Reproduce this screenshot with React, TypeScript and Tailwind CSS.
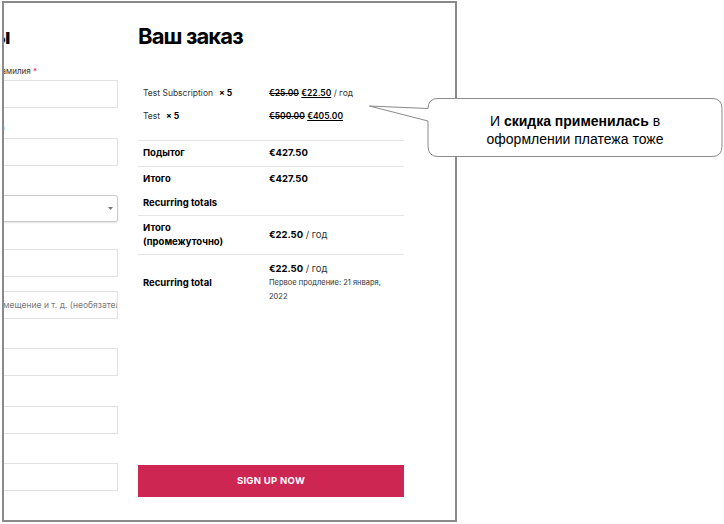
import React from "react";

const inter = { fontFamily: "Inter, 'Noto Sans', sans-serif" } as const;

function Field({ h = "h-[28px]", mt, children }: { h?: string; mt: string; children?: React.ReactNode }) {
  return (
    <div className={`${mt} ${h} -ml-[20px] w-[134px] shrink-0 border border-[#e2e2e2] bg-white overflow-hidden flex items-center`}>
      {children}
    </div>
  );
}

export default function App() {
  return (
    <div className="relative w-[724px] h-[524px] bg-white overflow-hidden" style={inter}>
      <div className="ml-[2px] mt-[1px] w-[455px] h-[521px] border-2 border-[#8a8a8a] flex overflow-hidden">
        {/* Left (cut-off) billing column */}
        <div className="w-[114px] shrink-0 flex flex-col">
          <div className="mt-[20px] h-[26px] w-[6px] flex justify-end whitespace-nowrap text-[22px] font-bold leading-[26px] tracking-[-0.04em] text-black">
            Детали оплаты
          </div>
          <div className="mt-[17px] h-[10px] w-[33px] flex justify-end whitespace-nowrap text-[8px] leading-[10px] text-[#333]">
            Фамилия&nbsp;<span className="text-[#cd2653]">*</span>
          </div>
          <Field mt="mt-[4px]" />
          <div className="mt-[15px] h-[10px] w-[1px] flex justify-end whitespace-nowrap text-[8px] leading-[10px] text-[#333]">
            Название компании (необязательно)
          </div>
          <Field mt="mt-[5px]" />
          <div className="mt-[29px] h-[27px] -ml-[20px] w-[134px] shrink-0 border border-[#c9c9c9] rounded-[3px] shadow-[0_1px_2px_rgba(0,0,0,0.12)] bg-white flex items-center justify-end pr-[4px]">
            <svg width="5" height="3" viewBox="0 0 5 3"><path d="M0 0h5L2.5 3z" fill="#777" /></svg>
          </div>
          <Field mt="mt-[27px]" />
          <Field mt="mt-[14px]">
            <span className="whitespace-nowrap text-[8.5px] text-[#777] ml-[-61px]">
              Квартира, блок, помещение и т. д. (необязательно)
            </span>
          </Field>
          <Field mt="mt-[29px]" />
          <Field mt="mt-[30px]" />
          <Field mt="mt-[29px]" />
        </div>

        {/* Right order column */}
        <div className="ml-[20px] w-[266px] shrink-0 flex flex-col">
          <h2 className="mt-[20px] h-[26px] text-[22px] font-bold leading-[26px] tracking-[-0.04em] text-black">
            Ваш заказ
          </h2>
          <div className="mt-[33px] flex flex-col">
            <div className="grid grid-cols-[131px_1fr] h-[23px] items-center">
              <div className="pl-[5px] text-[8.5px] text-[#333] whitespace-nowrap">
                Test Subscription<strong className="ml-[6px] font-bold text-black">× 5</strong>
              </div>
              <div className="text-[8.5px] text-[#333] whitespace-nowrap">
                <del className="font-semibold text-black">€25.00</del>{" "}
                <ins className="font-semibold text-black underline">€22.50</ins> / год
              </div>
            </div>
            <div className="grid grid-cols-[131px_1fr] h-[23px] items-center">
              <div className="pl-[5px] text-[8.5px] text-[#333] whitespace-nowrap">
                Test<strong className="ml-[6px] font-bold text-black">× 5</strong>
              </div>
              <div className="text-[8.5px] text-[#333] whitespace-nowrap">
                <del className="font-semibold text-black">€500.00</del>{" "}
                <ins className="font-semibold text-black underline">€405.00</ins>
              </div>
            </div>
          </div>
          <div className="mt-[12px] border-t border-[#e6e6e6] grid grid-cols-[131px_1fr] h-[26px] items-center text-[9.5px] font-bold text-black">
            <div className="pl-[5px]">Подытог</div>
            <div>€427.50</div>
          </div>
          <div className="border-t border-[#e6e6e6] grid grid-cols-[131px_1fr] h-[25px] items-center text-[9.5px] font-bold text-black">
            <div className="pl-[5px]">Итого</div>
            <div>€427.50</div>
          </div>
          <div className="h-[24px] flex items-center pl-[5px] text-[9.5px] font-bold text-black">
            Recurring totals
          </div>
          <div className="border-t border-[#e6e6e6] grid grid-cols-[131px_1fr] h-[39px] items-center text-[9.5px] text-black">
            <div className="pl-[5px] font-bold leading-[14px]">
              Итого
              <br />
              (промежуточно)
            </div>
            <div>
              <span className="font-bold">€22.50</span> <span className="text-[#333]">/ год</span>
            </div>
          </div>
          <div className="border-t border-[#e6e6e6] grid grid-cols-[131px_1fr] pt-[7px] items-center text-[9.5px] text-black">
            <div className="pl-[5px] font-bold">Recurring total</div>
            <div>
              <div className="leading-[14px]">
                <span className="font-bold">€22.50</span> <span className="text-[#333]">/ год</span>
              </div>
              <div className="w-[118px] text-[7.5px] leading-[14px] text-[#333]">
                Первое продление: 21 января, 2022
              </div>
            </div>
          </div>
          <button className="mt-auto mb-[23px] h-[32px] w-full bg-[#cd2653] text-white text-[9.5px] font-bold uppercase tracking-[0.03em]">
            Sign up now
          </button>
        </div>
      </div>

      {/* Callout */}
      <svg className="absolute left-0 top-0 pointer-events-none" width="724" height="524" viewBox="0 0 724 524">
        <path
          d="M438 98.5 H712 Q722 98.5 722 108.5 V146 Q722 156.5 712 156.5 H438 Q428 156.5 428 146 V121 L369.5 106 L428 108.5 Q428 98.5 438 98.5 Z"
          fill="#ffffff"
          stroke="#8a8a8a"
          strokeWidth="1"
        />
      </svg>
      <div
        className="absolute left-[428px] top-[112px] w-[294px] text-center text-[14px] leading-[18px] text-black"
        style={{ fontFamily: "'Liberation Sans', Arial, sans-serif" }}
      >
        И <b>скидка применилась</b> в
        <br />
        оформлении платежа тоже
      </div>
    </div>
  );
}
